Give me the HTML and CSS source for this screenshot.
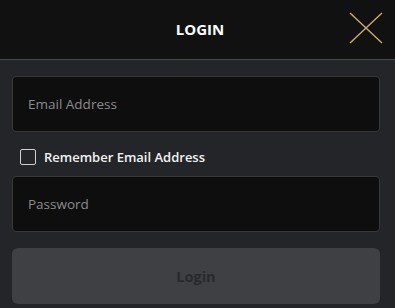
FILE: index.html
```html
<!DOCTYPE html>
<html>
<head>
<meta charset="utf-8">
<link rel="stylesheet" href="styles.css">
</head>
<body>
<div class="modal">
  <header class="head">
    <h1 class="title">LOGIN</h1>
    <button class="close" aria-label="Close">
      <svg width="34" height="32" viewBox="0 0 34 32"><path d="M1 1 L33 31 M33 1 L1 31" stroke="#c9ab72" stroke-width="1.4" fill="none"/></svg>
    </button>
  </header>
  <form class="body">
    <div class="field"><input class="input" type="text" placeholder="Email Address"></div>
    <label class="remember"><span class="box"></span><span class="rtext">Remember Email Address</span></label>
    <div class="field"><input class="input" type="password" placeholder="Password"></div>
    <button class="submit" type="button">Login</button>
  </form>
</div>
</body>
</html>
```

FILE: styles.css
```css
html, body { margin: 0; padding: 0; }
body {
  background: #242529;
  font-family: "Open Sans", "Noto Sans", sans-serif;
  width: 395px;
  height: 308px;
  overflow: hidden;
}
.modal { display: flex; flex-direction: column; }
.head {
  height: 59px;
  background: #111112;
  border-bottom: 1px solid #4b4a47;
  display: flex;
  align-items: center;
  justify-content: center;
  padding-left: 5px;
  position: relative;
}
.title {
  margin: 0 0 2px 0;
  color: #ffffff;
  font-size: 15px;
  font-weight: 700;
  letter-spacing: 0;
}
.close {
  position: absolute;
  right: 12px;
  top: 12px;
  width: 34px;
  height: 32px;
  padding: 0;
  border: 0;
  background: none;
}
.close svg { display: block; }
.body {
  display: flex;
  flex-direction: column;
  padding: 16px 15px 0 12px;
  margin: 0;
}
.input {
  box-sizing: border-box;
  width: 100%;
  height: 56px;
  background: #0e0e0f;
  border: 1px solid #37383b;
  border-radius: 4px;
  padding: 0 15px;
  font-family: inherit;
  font-size: 13.5px;
  color: #ddd;
  outline: none;
  display: block;
}
.input::placeholder { color: #8b8b8d; }
.remember {
  display: flex;
  align-items: center;
  box-sizing: border-box;
  height: 44px;
  padding: 6px 0 0 8px;
  gap: 8px;
}
.box {
  box-sizing: border-box;
  width: 16px;
  height: 16px;
  border: 1.5px solid #cfcfd0;
  border-radius: 2px;
}
.rtext {
  color: #f2f2f2;
  font-size: 13px;
  font-weight: 600;
}
.submit {
  margin-top: 16px;
  height: 56px;
  width: 100%;
  background: #3f4044;
  border: 0;
  border-radius: 6px;
  font-family: inherit;
  font-size: 14.5px;
  font-weight: 700;
  color: #28292c;
}
```
